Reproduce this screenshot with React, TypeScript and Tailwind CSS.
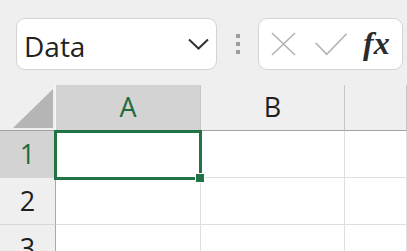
import { useState } from 'react'

const font = "font-['Open_Sans','Noto_Sans',sans-serif]"

function Chevron() {
  return (
    <svg width="21" height="12" viewBox="0 0 21 12" fill="none">
      <polyline points="1,1.5 10.5,10.5 20,1.5" stroke="#333" strokeWidth="2" />
    </svg>
  )
}

function CancelIcon() {
  return (
    <svg width="25" height="24" viewBox="0 0 25 24" fill="none">
      <path d="M1 1 L24 23 M24 1 L1 23" stroke="#b3b3b3" strokeWidth="1.6" />
    </svg>
  )
}

function CheckIcon() {
  return (
    <svg width="33" height="23" viewBox="0 0 33 23" fill="none">
      <polyline points="0.8,10 11.8,21.3 31.5,0.8" stroke="#b3b3b3" strokeWidth="1.6" />
    </svg>
  )
}

function Corner() {
  return (
    <svg width="40" height="39" viewBox="0 0 40 39">
      <polygon points="40,0 40,39 0,39" fill="#b5b5b5" />
    </svg>
  )
}

const columns = ['A', 'B', '']
const rows = [1, 2, 3]

export default function App() {
  const [name] = useState('Data')

  return (
    <div className={`${font} w-[407px] h-[251px] overflow-hidden bg-[#efefef] text-[#1f1f1f]`}>
      {/* name box + formula bar */}
      <div className="flex items-center h-[85px] pl-4 pb-[15px] pt-[18px]">
        <div className="flex items-center justify-between w-[201px] h-[52px] rounded-[9px] border border-[#d4d4d4] bg-white pl-[7px] pr-[7px]">
          <span className="text-[28px] leading-none text-[#222] mt-[3px]">{name}</span>
          <Chevron />
        </div>
        <div className="flex flex-col gap-[4px] ml-[19px] mr-[18px]">
          <div className="w-[4px] h-[4px] bg-[#9c9c9c]" />
          <div className="w-[4px] h-[4px] bg-[#9c9c9c]" />
          <div className="w-[4px] h-[4px] bg-[#9c9c9c]" />
        </div>
        <div className="flex items-center w-[145px] h-[52px] rounded-[9px] border border-[#d4d4d4] bg-white pl-[12px]">
          <CancelIcon />
          <div className="ml-[19px]">
            <CheckIcon />
          </div>
          <span className="ml-[15px] font-['Liberation_Serif',serif] italic font-bold text-[32px] leading-none text-[#2b2b2b] -mt-[2px]">
            fx
          </span>
        </div>
      </div>

      {/* sheet grid */}
      <div className="relative grid grid-cols-[56px_145px_144px_1fr] grid-rows-[46px_47px_47px_47px]">
        <div className="flex items-end justify-end pr-[2px] pb-[2px] border-r border-r-[#f7f7f7] border-b border-b-[#a3a3a3]">
          <Corner />
        </div>
        {columns.map((c, i) => (
          <div
            key={c + i}
            className={`flex items-center justify-center border-b border-b-[#a3a3a3] border-r border-r-[#c6c6c6] text-[27px] ${
              i === 0 ? 'bg-[#d3d3d3] text-[#1e6b41]' : 'bg-[#efefef] text-[#1f1f1f]'
            }`}
          >
            {c}
          </div>
        ))}
        {rows.map((r) => (
          <div key={r} className="contents">
            <div
              className={`flex items-center justify-center border-r border-r-[#a8a8a8] border-b border-b-[#d6d6d6] text-[27px] ${
                r === 1 ? 'bg-[#d3d3d3] text-[#1e6b41]' : 'bg-[#efefef] text-[#1f1f1f]'
              }`}
            >
              {r}
            </div>
            {columns.map((c, i) => (
              <div key={c + i} className="bg-white border-r border-r-[#dedede] border-b border-b-[#dedede]" />
            ))}
          </div>
        ))}

        {/* active cell */}
        <div className="absolute left-[54px] top-[45px] w-[148px] h-[50px] border-[3px] border-[#217346]" />
        <div className="absolute left-[195px] top-[88px] w-[10px] h-[10px] bg-[#217346] border border-white" />
      </div>
    </div>
  )
}
